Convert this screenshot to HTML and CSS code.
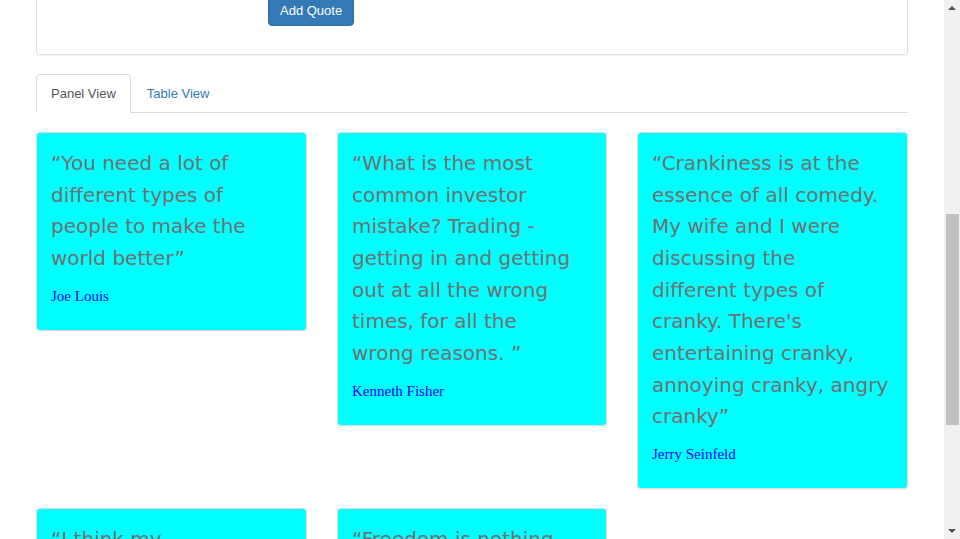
FILE: index.html
```html
<!DOCTYPE html>
<html>
<head>
<meta charset="utf-8">
<link rel="stylesheet" href="styles.css">
</head>
<body>
<div class="page">
  <main class="content">
    <div class="form-panel">
      <div class="form-actions">
        <button class="btn-primary" type="button">Add Quote</button>
      </div>
    </div>
    <ul class="tabs">
      <li class="tab active"><a>Panel View</a></li>
      <li class="tab"><a>Table View</a></li>
    </ul>
    <div class="cards">
      <div class="card">
        <p class="quote">“You need a lot of<br>different types of<br>people to make the<br>world better”</p>
        <p class="author"><a>Joe Louis</a></p>
      </div>
      <div class="card">
        <p class="quote">“What is the most<br>common investor<br>mistake? Trading -<br>getting in and getting<br>out at all the wrong<br>times, for all the<br>wrong reasons. ”</p>
        <p class="author"><a>Kenneth Fisher</a></p>
      </div>
      <div class="card">
        <p class="quote">“Crankiness is at the<br>essence of all comedy.<br>My wife and I were<br>discussing the<br>different types of<br>cranky. There's<br>entertaining cranky,<br>annoying cranky, angry<br>cranky”</p>
        <p class="author"><a>Jerry Seinfeld</a></p>
      </div>
      <div class="card">
        <p class="quote">“I think my<br>best work is still<br>ahead of me”</p>
        <p class="author"><a>Unknown</a></p>
      </div>
      <div class="card">
        <p class="quote">“Freedom is nothing<br>but a chance to be<br>better”</p>
        <p class="author"><a>Albert Camus</a></p>
      </div>
    </div>
  </main>
  <aside class="scrollbar">
    <div class="arrow up"></div>
    <div class="track">
      <div class="track-space"></div>
      <div class="thumb"></div>
    </div>
    <div class="arrow down"></div>
  </aside>
</div>
</body>
</html>
```
FILE: styles.css
```css
* { box-sizing: border-box; }
html, body { margin: 0; padding: 0; height: 100%; overflow: hidden; background: #fff; }
body { font-family: "Liberation Sans", Arial, sans-serif; font-size: 14px; color: #333; }

.page { display: flex; height: 539px; }
.content { flex: 1; overflow: hidden; padding: 0 36px; }

.form-panel {
  margin-top: -40px;
  border: 1px solid #ddd;
  border-radius: 4px;
  box-shadow: 0 1px 1px rgba(0,0,0,.05);
  padding: 31px 15px 28px;
}
.form-actions { padding-left: 216px; }
.btn-primary {
  display: block;
  height: 34px;
  padding: 8px 11px 4px;
  font-family: "Liberation Sans", Arial, sans-serif;
  font-size: 13px;
  line-height: 20px;
  color: #fff;
  background: #337ab7;
  border: 1px solid #2e6da4;
  border-radius: 4px;
}

.tabs {
  list-style: none;
  margin: 19px 0 0;
  padding: 0;
  display: flex;
  border-bottom: 1px solid #ddd;
}
.tab { margin-bottom: -1px; margin-right: 2px; }
.tab a {
  display: block;
  padding: 10px 14px;
  line-height: 17px;
  font-size: 13px;
  color: #337ab7;
  border: 1px solid transparent;
  border-radius: 4px 4px 0 0;
}
.tab.active a {
  color: #555;
  background: #fff;
  border-color: #ddd #ddd transparent;
}
.tab + .tab a { padding-left: 13px; }

.cards {
  margin-top: 19px;
  display: grid;
  grid-template-columns: 271px 270px 271px;
  column-gap: 30px;
  row-gap: 19px;
  align-items: start;
}
.card {
  background: #00ffff;
  border: 1px solid #ddd;
  border-radius: 4px;
  box-shadow: 0 1px 1px rgba(0,0,0,.05);
  padding: 14px;
}
.quote {
  margin: 0 0 11px;
  padding-top: 1px;
  font-family: "DejaVu Sans", "Noto Sans", sans-serif;
  font-size: 20px;
  line-height: 31.67px;
  color: #707070;
}
.author {
  margin: 0 0 10px;
  font-family: "Liberation Serif", "Times New Roman", serif;
  font-size: 15px;
  line-height: 20px;
}
.author a { color: #0000ff; }

.scrollbar {
  width: 16px;
  flex: none;
  background: #f1f1f1;
  display: flex;
  flex-direction: column;
}
.arrow { height: 16px; flex: none; display: flex; align-items: center; justify-content: center; }
.arrow::before {
  content: "";
  width: 0; height: 0;
  border-left: 4px solid transparent;
  border-right: 4px solid transparent;
}
.arrow.up::before { border-bottom: 4px solid #505050; }
.arrow.down::before { border-top: 4px solid #505050; }
.track { flex: 1; display: flex; flex-direction: column; align-items: center; }
.track-space { height: 198px; flex: none; }
.thumb { width: 13px; height: 211px; background: #c1c1c1; }
```
